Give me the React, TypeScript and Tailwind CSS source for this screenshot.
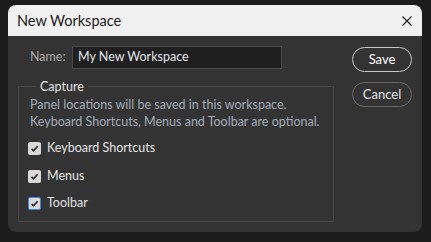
import React from 'react';

const font = { fontFamily: 'Lato, "Noto Sans", sans-serif' };

const Check = ({ focused }: { focused?: boolean }) => (
  <span
    className={
      'flex h-[13px] w-[13px] items-center justify-center rounded-[2px] bg-[#d9d9d9] ' +
      (focused ? 'border border-[#3d86e0]' : '')
    }
  >
    <svg width="9" height="9" viewBox="0 0 9 9">
      <polyline points="1.5,4.8 3.6,6.8 7.6,2.2" fill="none" stroke="#2b2b2b" strokeWidth="1.7" />
    </svg>
  </span>
);

const Option = ({ label, focused }: { label: string; focused?: boolean }) => (
  <label className="flex h-[13px] items-center gap-[6px]">
    <Check focused={focused} />
    <span className="text-[12.5px] leading-none text-[#e4e4e4]">{label}</span>
  </label>
);

export default function App() {
  return (
    <div className="h-[242px] w-[431px] bg-[#1c1c1c] pl-[8px] pt-[5px]" style={font}>
      <div className="flex h-[227px] w-[414px] flex-col overflow-hidden rounded-[8px]">
        <div className="flex h-[31px] items-center justify-between bg-[#f0f0f0] pl-[9px] pr-[10px]">
          <span className="text-[14.5px] text-[#1a1a1a]">New Workspace</span>
          <svg width="10" height="10" viewBox="0 0 10 10">
            <path d="M0.5 0.5 L9.5 9.5 M9.5 0.5 L0.5 9.5" stroke="#1a1a1a" strokeWidth="1.1" />
          </svg>
        </div>
        <div className="flex flex-1 bg-[#333333] pl-[10px] pt-[10px]">
          <div className="w-[316px]">
            <div className="ml-[12px] flex h-[23px] items-center">
              <span className="w-[42px] text-[12.5px] text-[#a8a8a8]">Name:</span>
              <div className="flex h-[23px] w-[210px] items-center border border-[#4a4a4a] bg-[#1f1f1f] pl-[5px] text-[12.5px] text-[#e2e6ea]">
                My New Workspace
              </div>
            </div>
            <fieldset className="mt-[9px] h-[144px] border border-[#474747] pl-[11px]">
              <legend className="ml-[6px] px-[4px] text-[12.5px] leading-[17px] text-[#e4e4e4]">Capture</legend>
              <p className="mt-[1px] whitespace-nowrap text-[12.5px] leading-[17px] text-[#a3adb8]">
                Panel locations will be saved in this workspace.
                <br />
                Keyboard Shortcuts, Menus and Toolbar are optional.
              </p>
              <div className="ml-[-2px] mt-[12px] flex flex-col gap-[14.5px]">
                <Option label="Keyboard Shortcuts" />
                <Option label="Menus" />
                <Option label="Toolbar" focused />
              </div>
            </fieldset>
          </div>
          <div className="ml-[18px] mt-[1px] flex flex-col gap-[10px]">
            <button className="h-[25px] w-[60px] rounded-full border border-[#c8c8c8] text-[13px] text-white">
              Save
            </button>
            <button className="h-[25px] w-[60px] rounded-full border border-[#6a6a6a] text-[13px] text-[#e4e4e4]">
              Cancel
            </button>
          </div>
        </div>
      </div>
    </div>
  );
}
